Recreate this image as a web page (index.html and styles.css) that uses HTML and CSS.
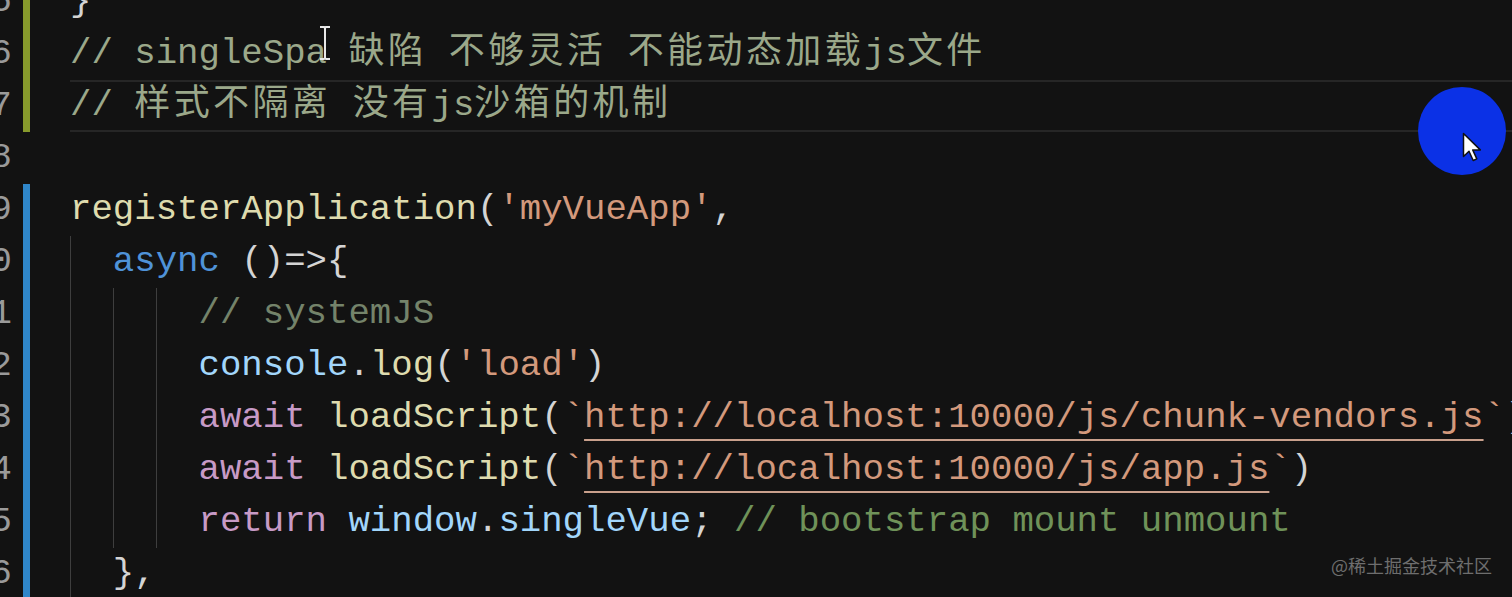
FILE: index.html
```html
<!DOCTYPE html>
<html lang="en">
<head>
    <meta charset="UTF-8">
    <meta name="viewport" content="width=device-width, initial-scale=1.0">
    <title>main.js - single-spa</title>
    <link rel="stylesheet" href="styles.css">
</head>
<body>

    <div class="editor">
        <div class="line"><span class="ln">15</span><span class="mark added"></span><span class="code">}</span></div>
        <div class="line"><span class="ln">16</span><span class="mark added"></span><span class="code"><span class="cm">// singleSpa <span class="cjk">缺陷</span> <span class="cjk">不够灵活</span> <span class="cjk">不能动态加载</span>js<span class="cjk">文件</span></span></span></div>
        <div class="line"><span class="ln">17</span><span class="mark added"></span><span class="code current"><span class="cm">// <span class="cjk">样式不隔离</span> <span class="cjk">没有</span>js<span class="cjk">沙箱的机制</span></span></span></div>
        <div class="line"><span class="ln">18</span><span class="mark"></span><span class="code"></span></div>
        <div class="line"><span class="ln">19</span><span class="mark modified"></span><span class="code"><span class="fn">registerApplication</span>(<span class="str">'myVueApp'</span>,</span></div>
        <div class="line"><span class="ln">20</span><span class="mark modified"></span><span class="code"><span class="ind">  </span><span class="kw">async</span> ()=&gt;{</span></div>
        <div class="line"><span class="ln">21</span><span class="mark modified"></span><span class="code"><span class="ind">  </span><span class="ind">  </span><span class="ind">  </span><span class="cm dim">// systemJS</span></span></div>
        <div class="line"><span class="ln">22</span><span class="mark modified"></span><span class="code"><span class="ind">  </span><span class="ind">  </span><span class="ind">  </span><span class="var">console</span>.<span class="fn">log</span>(<span class="str">'load'</span>)</span></div>
        <div class="line"><span class="ln">23</span><span class="mark modified"></span><span class="code"><span class="ind">  </span><span class="ind">  </span><span class="ind">  </span><span class="ctl">await</span> <span class="fn">loadScript</span>(<span class="str">`<span class="link">http://localhost:10000/js/chunk-vendors.js</span>`</span>)</span></div>
        <div class="line"><span class="ln">24</span><span class="mark modified"></span><span class="code"><span class="ind">  </span><span class="ind">  </span><span class="ind">  </span><span class="ctl">await</span> <span class="fn">loadScript</span>(<span class="str">`<span class="link">http://localhost:10000/js/app.js</span>`</span>)</span></div>
        <div class="line"><span class="ln">25</span><span class="mark modified"></span><span class="code"><span class="ind">  </span><span class="ind">  </span><span class="ind">  </span><span class="ctl">return</span> <span class="var">window</span>.<span class="var">singleVue</span>; <span class="cm tail">// bootstrap mount unmount</span></span></div>
        <div class="line"><span class="ln">26</span><span class="mark modified"></span><span class="code"><span class="ind">  </span>},</span></div>
    </div>

    <!-- overlays: text cursor, click highlight, watermark -->
    <svg class="ibeam" width="14" height="34" viewBox="0 0 14 34">
        <path d="M2 1h4l1 1 1-1h4M7 2v30M2 33h4l1-1 1 1h4" fill="none" stroke="#e8e8e8" stroke-width="2"/>
    </svg>

    <div class="click-ring">
        <svg class="pointer" width="20" height="30" viewBox="0 0 20 30">
            <path d="M1.5 1.5v23l5.5-5.2 4.2 9.2 3.6-1.6-4.1-9h7.6z" fill="#fff" stroke="#111" stroke-width="1.5" stroke-linejoin="round"/>
        </svg>
    </div>

    <div class="watermark">@稀土掘金技术社区</div>

</body>
</html>
```

FILE: styles.css
```css
body {
    margin: 0;
    height: 100vh;
    overflow: hidden;
    background-color: #121212;
    color: #d4d4d4;
    font-family: "Liberation Mono", "Noto Sans CJK SC", monospace;
    font-size: 35.7px;
}
.editor {
    margin-top: -24px;
}
.line {
    display: flex;
    height: 52px;
    line-height: 52px;
    white-space: pre;
}
.ln {
    display: flex;
    justify-content: flex-end; /* overflow to the left, only last digit shows */
    width: 12px;
    flex-shrink: 0;
    color: #9a9a9a;
}
.mark {
    width: 7px;
    margin-left: 11px;
    flex-shrink: 0;
}
.mark.added {
    background-color: #879a2c;
}
.mark.modified {
    background-color: #2f86c9;
}
.code {
    flex: 1;
    margin-left: 40px;
}
.code.current {
    box-shadow: inset 0 2px #262626, inset 0 -2px #262626;
}
.ind {
    display: inline-block;
    box-shadow: inset 1px 0 #3e3e3e;
}
.cjk {
    font-family: "Noto Sans CJK SC", sans-serif;
    font-size: 36px;
    letter-spacing: 3.4px;
    line-height: 1;
}

/* token colours */
.cm { color: #9ba88a; }
.cm.dim { color: #74836a; }
.cm.tail { color: #6f9259; }
.fn { color: #dedbae; }
.str { color: #d3997c; }
.kw { color: #4f92d8; }
.ctl { color: #c79ac6; }
.var { color: #a2d6fb; }
.link {
    text-decoration: underline;
    text-decoration-color: #c9a08c;
    text-decoration-thickness: 2px;
    text-underline-offset: 12px;
}

/* overlays */
.ibeam {
    position: absolute;
    left: 318px;
    top: 26px;
}
.click-ring {
    position: absolute;
    left: 1418px;
    top: 87px;
    width: 88px;
    height: 88px;
    border-radius: 50%;
    background-color: #0b31e6;
}
.pointer {
    position: absolute;
    left: 44px;
    top: 45px;
}
.watermark {
    position: absolute;
    right: 20px;
    bottom: 19px;
    font-family: "Noto Sans CJK SC", sans-serif;
    font-size: 18px;
    color: #6e6e6e;
}
```
